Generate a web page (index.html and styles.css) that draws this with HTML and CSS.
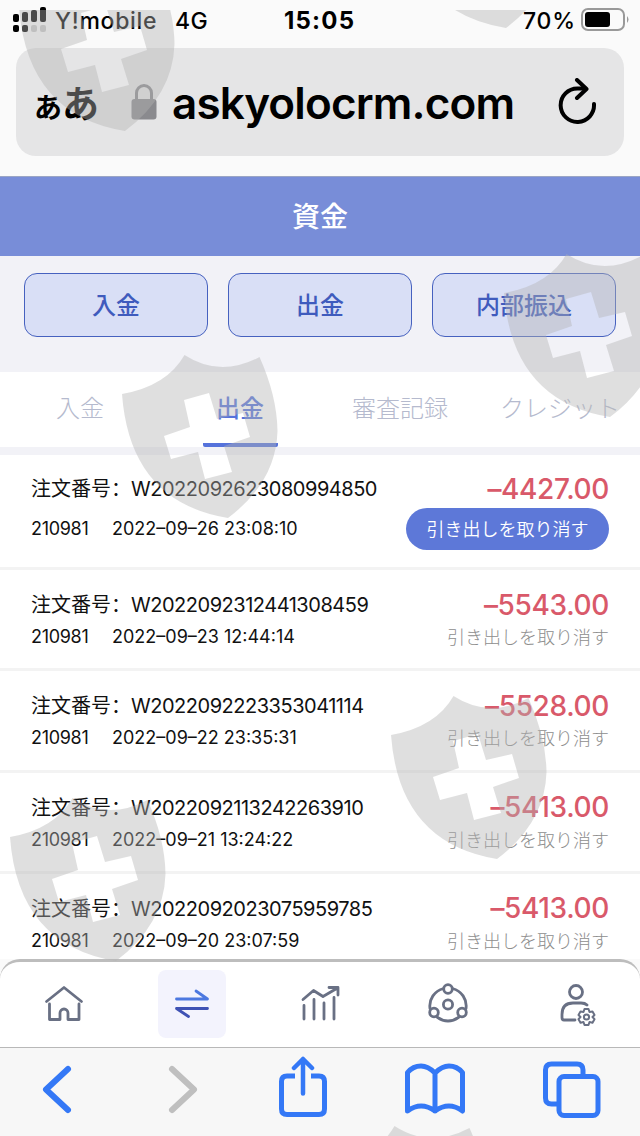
FILE: index.html
```html
<!DOCTYPE html>
<html lang="ja">
<head>
    <meta charset="UTF-8">
    <meta name="viewport" content="width=device-width, initial-scale=1.0">
    <title>資金</title>
    <link rel="stylesheet" href="styles.css">
</head>
<body>
    <div class="phone">
        <div class="status-bar">
            <svg class="signal" width="34" height="26" viewBox="0 0 34 26">
                <rect x="0" y="7" width="6" height="8" rx="2"/>
                <rect x="9" y="5" width="6" height="10" rx="2"/>
                <rect x="18" y="3" width="6" height="12" rx="2"/>
                <rect x="27" y="0" width="6" height="15" rx="2"/>
                <rect x="0" y="18" width="6" height="7" rx="2"/>
                <rect x="9" y="18" width="6" height="7" rx="2"/>
                <rect x="18" y="18" width="6" height="7" rx="2" fill="#c8c8c8"/>
                <rect x="27" y="18" width="6" height="7" rx="2" fill="#c8c8c8"/>
            </svg>
            <span class="carrier">Y!mobile</span>
            <span class="network">4G</span>
            <span class="clock">15:05</span>
            <span class="percent">70%</span>
            <svg class="battery" width="48" height="24" viewBox="0 0 48 24">
                <rect x="1" y="1" width="42" height="21" rx="6" fill="none" stroke="#999" stroke-width="2"/>
                <rect x="4" y="4" width="25" height="15" rx="3"/>
                <path d="M46 8 Q49 11.500 46 15 Z" fill="#999"/>
            </svg>
        </div>

        <div class="url-bar">
            <span class="text-size"><small>あ</small>あ</span>
            <svg class="lock" width="26" height="36" viewBox="0 0 26 36">
                <path d="M5.500 18 V9 a7.500 7.500 0 0 1 15 0 V18" fill="none" stroke="#8a8a8e" stroke-width="3"/>
                <rect x="0.500" y="15" width="25" height="20.500" rx="3" fill="#8a8a8e"/>
            </svg>
            <span class="domain">askyolocrm.com</span>
            <svg class="reload" width="40" height="46" viewBox="0 0 40 46" fill="none" stroke="#000" stroke-width="4" stroke-linecap="round" stroke-linejoin="round">
                <path d="M36 26 A16.700 16.700 0 1 1 19.500 10.500 H27"/>
                <path d="M19 2 L28.500 11 L19 20"/>
            </svg>
        </div>

        <header class="page-title">資金</header>

        <div class="actions">
            <button class="action-btn">入金</button>
            <button class="action-btn">出金</button>
            <button class="action-btn">内部振込</button>
        </div>

        <nav class="tabs">
            <span class="tab">入金</span>
            <span class="tab active">出金</span>
            <span class="tab">審査記録</span>
            <span class="tab">クレジット</span>
        </nav>

        <main class="orders">
            <div class="order first">
                <div class="row">
                    <span class="order-no" lang="zh-CN">注文番号：<b>W2022092623080994850</b></span>
                    <span class="amount">–4427.00</span>
                </div>
                <div class="row">
                    <span class="meta"><i>210981</i>2022–09–26 23:08:10</span>
                    <button class="cancel-btn">引き出しを取り消す</button>
                </div>
            </div>
            <div class="order">
                <div class="row">
                    <span class="order-no" lang="zh-CN">注文番号：<b>W2022092312441308459</b></span>
                    <span class="amount">–5543.00</span>
                </div>
                <div class="row">
                    <span class="meta"><i>210981</i>2022–09–23 12:44:14</span>
                    <span class="cancel">引き出しを取り消す</span>
                </div>
            </div>
            <div class="order">
                <div class="row">
                    <span class="order-no" lang="zh-CN">注文番号：<b>W2022092223353041114</b></span>
                    <span class="amount">–5528.00</span>
                </div>
                <div class="row">
                    <span class="meta"><i>210981</i>2022–09–22 23:35:31</span>
                    <span class="cancel">引き出しを取り消す</span>
                </div>
            </div>
            <div class="order">
                <div class="row">
                    <span class="order-no" lang="zh-CN">注文番号：<b>W2022092113242263910</b></span>
                    <span class="amount">–5413.00</span>
                </div>
                <div class="row">
                    <span class="meta"><i>210981</i>2022–09–21 13:24:22</span>
                    <span class="cancel">引き出しを取り消す</span>
                </div>
            </div>
            <div class="order last">
                <div class="row">
                    <span class="order-no" lang="zh-CN">注文番号：<b>W2022092023075959785</b></span>
                    <span class="amount">–5413.00</span>
                </div>
                <div class="row">
                    <span class="meta"><i>210981</i>2022–09–20 23:07:59</span>
                    <span class="cancel">引き出しを取り消す</span>
                </div>
            </div>
        </main>

        <nav class="app-nav">
            <a class="nav-item">
                <svg width="44" height="44" viewBox="0 0 44 44">
                    <path d="M4.500 19.500 L22 5.500 L39.500 19.500"/>
                    <path d="M7.500 22 V37.500 H18 V31 a4 4 0 0 1 8 0 V37.500 H37 V22"/>
                </svg>
            </a>
            <a class="nav-item current">
                <svg width="44" height="44" viewBox="0 0 44 44">
                    <path d="M6.500 17 H37.500 L26 9" stroke="#4c78e0"/>
                    <path d="M37.500 26.500 H6.500 L18.500 34.500" stroke="#3f52b4"/>
                </svg>
            </a>
            <a class="nav-item">
                <svg width="44" height="44" viewBox="0 0 44 44">
                    <path d="M5 17.500 L15.500 8.500 L25 14.500 L39.500 6 M31 5.500 H40 V13"/>
                    <path d="M6 23.500 V37 M16 17.500 V37 M26 21 V37 M36 15.500 V37"/>
                </svg>
            </a>
            <a class="nav-item">
                <svg width="44" height="44" viewBox="0 0 44 44">
                    <path d="M17.500 6.500 A18 18 0 0 0 4 26.500 M26.500 6.500 A18 18 0 0 1 40 26.500 M11 35 Q22 43 33 35"/>
                    <circle cx="22" cy="7" r="4.300"/>
                    <circle cx="22" cy="22.500" r="4.600"/>
                    <circle cx="8" cy="30.500" r="4.300"/>
                    <circle cx="36" cy="30.500" r="4.300"/>
                </svg>
            </a>
            <a class="nav-item">
                <svg width="44" height="44" viewBox="0 0 44 44">
                    <circle cx="22" cy="10" r="6.500"/>
                    <path d="M33 23 Q31 21 27 21 H19 Q8 21 8 32.500 V35.500 Q8 38 10 38 H21"/>
                    <path class="gear" d="M30.500 27 h4 l1 3 l3 -0.500 l2 3.500 l-2 2 l2 2.200 l-2 3.500 l-3 -0.700 l-1 3 h-4 l-1 -3 l-3 0.700 l-2 -3.500 l2 -2.200 l-2 -2 l2 -3.500 l3 0.500 Z"/>
                    <circle class="gear" cx="32.500" cy="35" r="2.600"/>
                </svg>
            </a>
        </nav>

        <footer class="toolbar">
            <svg width="64" height="64" viewBox="0 0 64 64" stroke="#3478f6">
                <path d="M42 13 L20 33.500 L42 54" stroke-width="6"/>
            </svg>
            <svg width="64" height="64" viewBox="0 0 64 64" stroke="#bfbfbf">
                <path d="M18 13 L40 33.500 L18 54" stroke-width="6"/>
            </svg>
            <svg width="64" height="64" viewBox="0 0 64 64" stroke="#3478f6">
                <path d="M24 20 H16 Q10.500 20 10.500 25.500 V53 Q10.500 58.500 16 58.500 H48 Q53.500 58.500 53.500 53 V25.500 Q53.500 20 48 20 H40" stroke-width="5" stroke-linecap="butt"/>
                <path d="M32 37.500 V3 M23 12 L32 3 L41 12" stroke-width="4.500"/>
            </svg>
            <svg width="64" height="64" viewBox="0 0 64 64" stroke="#3478f6">
                <path d="M32 17 Q25 10 18 10 Q10 10 4.500 16.500 V55 Q18 45 32 55 Q46 45 59.500 55 V16.500 Q54 10 46 10 Q39 10 32 17 V55" stroke-width="5"/>
            </svg>
            <svg width="64" height="64" viewBox="0 0 64 64" stroke="#3478f6">
                <path d="M18 48 H12.500 Q6.500 48 6.500 42 V14 Q6.500 8 12.500 8 H38 Q44 8 44 14 V19" stroke-width="5" stroke-linecap="butt"/>
                <rect x="20" y="20.500" width="39" height="39" rx="5" stroke-width="5"/>
            </svg>
        </footer>

        <!-- shield watermark -->
        <svg class="watermark" width="640" height="1136" viewBox="0 0 640 1136">
            <defs>
                <path id="shield" fill-rule="evenodd" d="M0 0 Q45 -8 62.500 -39 Q98 -16 137.500 -37 Q155 2 155.500 37 Q154 88 106 124 Q8 108 0 0 Z M62 6 L87 -1 L95 25 L121 19 L128 43 L102 52 L110 78 L83 85 L76 58 L49 65 L42 42 L68 33 Z"/>
                <clipPath id="visible"><rect y="10" width="640" height="1126"/></clipPath>
            </defs>
            <g clip-path="url(#visible)" fill="#b2b2b2" fill-opacity="0.420">
                <use href="#shield" x="19" y="7"/>
                <use href="#shield" x="400" y="-96"/>
                <use href="#shield" x="504" y="293"/>
                <use href="#shield" x="122" y="394"/>
                <use href="#shield" x="391" y="735"/>
                <use href="#shield" x="10" y="837"/>
                <use href="#shield" x="332" y="1165"/>
            </g>
        </svg>
    </div>
</body>
</html>
```
FILE: styles.css
```css
* {
    box-sizing: border-box;
}

body {
    margin: 0;
    padding: 0;
    background-color: #fafafa;
    font-family: Inter, 'Noto Sans CJK JP', sans-serif;
    color: #111;
}

button {
    font-family: inherit;
    padding: 0;
}

.phone {
    position: relative;
    width: 640px;
    height: 1136px;
    overflow: hidden;
    display: flex;
    flex-direction: column;
}

/* Status bar */
.status-bar {
    height: 48px;
    padding: 7px 11px 0 13px;
    display: flex;
    align-items: flex-start;
    color: #000;
    font-size: 23px;
    font-weight: 500;
    line-height: 28px;
    white-space: nowrap;
}

.carrier {
    width: 120px;
    margin-left: 8px;
    letter-spacing: 0.7px;
}

.network {
    width: 109px;
    letter-spacing: 0.5px;
}

.clock {
    width: 239px;
    font-size: 24px;
    font-weight: 700;
    letter-spacing: 1.2px;
}

.percent {
    width: 58px;
    letter-spacing: 0.8px;
}

.battery {
    margin-top: 1px;
}

/* Address bar */
.url-bar {
    height: 108px;
    margin: 0 16px;
    padding: 0 26px 1px 18px;
    border-radius: 20px;
    background-color: #e5e5e6;
    display: flex;
    align-items: center;
    color: #000;
}

.text-size {
    width: 97px;
    font-size: 37px;
    font-weight: 700;
    white-space: nowrap;
}

.text-size small {
    font-size: 28px;
}

.reload {
    margin-bottom: 2px;
}

.domain {
    margin-left: 15px;
    padding-top: 2px;
    flex: 1;
    font-size: 44px;
    font-weight: 600;
    letter-spacing: -0.85px;
    white-space: nowrap;
}

.page-title {
    height: 80px;
    margin-top: 20px;
    border-top: 1px solid #9aa5c4;
    background-color: #788dd8;
    color: #fff;
    font-size: 28px;
    font-weight: 500;
    line-height: 80px;
    text-align: center;
}

.actions {
    height: 116px;
    padding: 17px 24px 0;
    background-color: #f2f2f7;
    display: flex;
    gap: 20px;
}

.action-btn {
    flex: 1;
    height: 64px;
    padding-bottom: 3px;
    border: 1px solid #4661bf;
    border-radius: 13px;
    background-color: #d9dff6;
    color: #3f5bbd;
    font-size: 24px;
    font-weight: 500;
}

.tabs {
    height: 83px;
    border-bottom: 8px solid #f2f2f7;
    background-color: #fff;
    display: grid;
    grid-template-columns: repeat(4, 160px);
    justify-items: center;
}

.tab {
    width: 120px;
    height: 75px;
    line-height: 73px;
    text-align: center;
    color: #b5bace;
    font-size: 24px;
    font-weight: 300;
    white-space: nowrap;
}

.tab.active {
    width: 75px;
    border-bottom: 4px solid #5572db;
    border-radius: 2px;
    color: #5572db;
    font-weight: 500;
}

/* Orders */
.orders {
    height: 504px;
    background-color: #fff;
}

.order {
    height: 101.300px;
    padding: 18px 31px 0;
    border-bottom: 3px solid #f3f3f3;
}

.order.first {
    height: 115px;
    padding-top: 17px;
}

.order.last {
    border-bottom: 0;
}

.row {
    display: flex;
    justify-content: space-between;
    align-items: center;
    height: 33px;
    white-space: nowrap;
}

.order.first .row + .row {
    height: 42px;
    margin-top: 3px;
}

.order-no {
    display: flex;
    align-items: baseline;
    padding-bottom: 2px;
    font-family: Inter, 'Noto Sans CJK SC', sans-serif;
    font-size: 20px;
}

.order-no b {
    font-weight: 400;
    letter-spacing: -0.48px;
}

.amount {
    color: #d9596a;
    font-size: 28px;
    font-weight: 500;
    letter-spacing: -0.35px;
}

.meta {
    display: flex;
    padding-bottom: 2px;
    font-size: 18px;
}

.meta i {
    width: 81px;
    font-style: normal;
    letter-spacing: -0.3px;
}

.cancel {
    padding-bottom: 3px;
    color: #8e8e8e;
    font-size: 18px;
    font-weight: 300;
}

.cancel-btn {
    width: 203px;
    height: 42px;
    padding-bottom: 2px;
    border: 0;
    border-radius: 21px;
    background-color: #5d78d8;
    color: #fff;
    font-size: 18px;
    font-weight: 350;
}

/* App navigation */
.app-nav {
    height: 88px;
    padding-bottom: 2px;
    border-top: 3px solid #bdbdbd;
    border-radius: 20px 20px 0 0;
    background-color: #fff;
    display: grid;
    grid-template-columns: repeat(5, 128px);
    place-items: center;
    z-index: 1;
}

.nav-item {
    width: 68px;
    height: 68px;
    border-radius: 8px;
    display: flex;
    align-items: center;
    justify-content: center;
}

.nav-item.current {
    background-color: #f3f3fd;
}

.nav-item svg {
    fill: none;
    stroke: #697084;
    stroke-width: 2.8;
    stroke-linecap: round;
    stroke-linejoin: round;
}

.nav-item .gear {
    stroke-width: 2;
}

/* Browser toolbar */
.toolbar {
    height: 89px;
    padding: 8px 0 0 26px;
    border-top: 1px solid #b8b8b8;
    background-color: #f7f7f7;
    display: grid;
    grid-template-columns: 128px 117px 132px 136px 64px;
}

.toolbar svg {
    fill: none;
    stroke-linecap: round;
    stroke-linejoin: round;
}

.watermark {
    position: absolute;
    top: 0;
    left: 0;
    z-index: 2;
    pointer-events: none;
}
```
